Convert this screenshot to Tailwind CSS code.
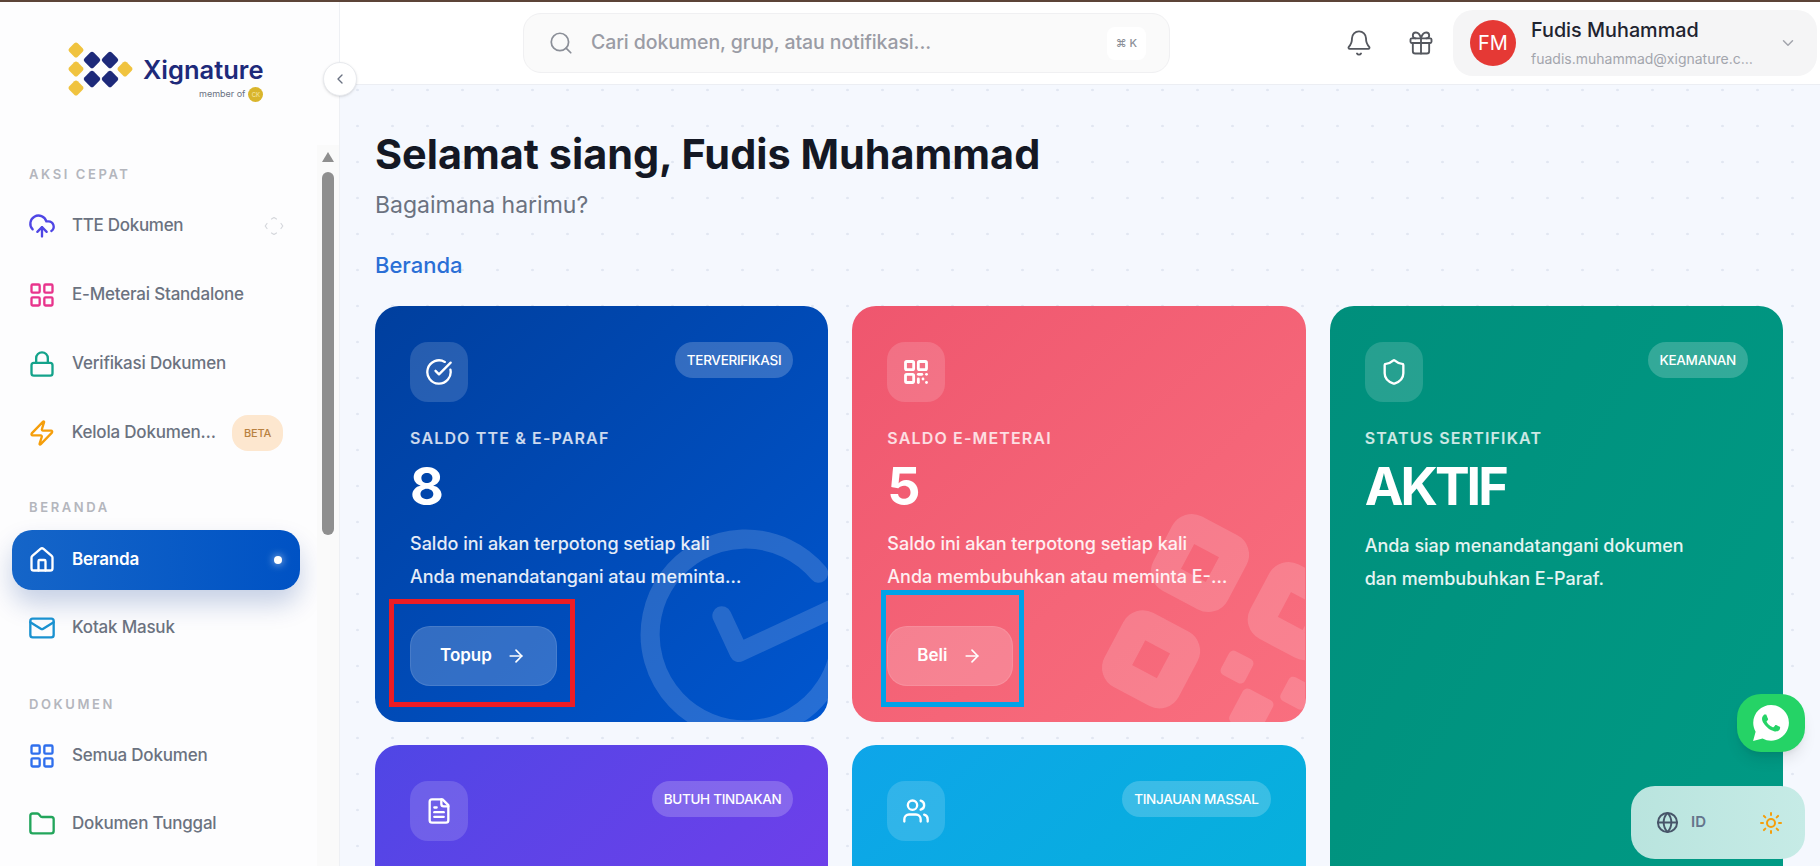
<!DOCTYPE html>
<html lang="id">
<head>
  <meta charset="UTF-8" />
  <meta name="viewport" content="width=device-width, initial-scale=1" />
  <title>Beranda - Xignature</title>
  <script src="https://cdn.jsdelivr.net/npm/@tailwindcss/browser@4"></script>
</head>
<body class="h-[866px] overflow-hidden flex flex-col bg-white text-gray-900 font-['Inter','DejaVu_Sans',sans-serif]">
  <div class="h-[2px] shrink-0 bg-[#5c4438]"></div>

  <div class="relative flex flex-1 min-h-0">
    <!-- Sidebar -->
    <aside class="w-[340px] shrink-0 flex flex-col bg-[#fdfdfe] border-r border-[#eef0f4]">
      <!-- Logo -->
      <div class="relative h-[143px] shrink-0">
        <svg class="absolute left-[60px] top-[30px]" width="80" height="76" viewBox="60 32 80 76">
          <g fill="#f0c33f">
            <rect x="-6" y="-6" width="12" height="12" rx="2.5" transform="translate(76 50) rotate(45)" />
            <rect x="-6" y="-6" width="12" height="12" rx="2.5" transform="translate(76 69) rotate(45)" />
            <rect x="-6" y="-6" width="12" height="12" rx="2.5" transform="translate(76 88) rotate(45)" />
            <rect x="-6" y="-6" width="12" height="12" rx="2.5" transform="translate(125 69) rotate(45)" />
          </g>
          <g fill="#1e2a7a">
            <rect x="-6.5" y="-6.5" width="13" height="13" rx="2.5" transform="translate(92 60) rotate(45)" />
            <rect x="-6.5" y="-6.5" width="13" height="13" rx="2.5" transform="translate(110 60) rotate(45)" />
            <rect x="-6.5" y="-6.5" width="13" height="13" rx="2.5" transform="translate(92 79) rotate(45)" />
            <rect x="-6.5" y="-6.5" width="13" height="13" rx="2.5" transform="translate(110 79) rotate(45)" />
          </g>
        </svg>
        <div class="absolute left-[143px] top-[51px] text-[25.5px] leading-[34px] font-semibold text-[#1e2a7a]">Xignature</div>
        <div class="absolute left-[199px] top-[83px] flex items-center gap-[3px]">
          <span class="text-[9px] leading-[18px] text-gray-500">member of</span>
          <span class="w-[15px] h-[15px] rounded-full bg-[#d9b52c] text-[6px] leading-[15px] text-center text-[#f6e9ad]">CK</span>
        </div>
      </div>

      <!-- Menu -->
      <div class="relative flex-1 min-h-0 overflow-hidden pl-3 pr-[39px] pt-[19px]">
        <p class="pl-[17px] h-5 text-[13px] leading-5 font-semibold tracking-[0.2em] text-[#b4b6bd]">AKSI CEPAT</p>
        <div class="mt-3 flex flex-col gap-[9px]">
          <a class="h-[60px] flex items-center gap-4 pl-4 text-[17px] font-medium tracking-[-0.3px] text-[#6b7280]">
            <svg class="w-7 h-7 text-[#4f46e5]" fill="none" viewBox="0 0 24 24" stroke="currentColor" stroke-width="2" stroke-linecap="round" stroke-linejoin="round"><path d="M12 13v8" /><path d="M4 14.899A7 7 0 1 1 15.71 8h1.79a4.5 4.5 0 0 1 2.5 8.242" /><path d="m8 17 4-4 4 4" /></svg>
            <span>TTE Dokumen</span>
            <svg class="ml-auto mr-4 w-5 h-5 text-[#d5d7dc]" fill="none" viewBox="0 0 20 20" stroke="currentColor" stroke-width="1.2" stroke-linecap="round" stroke-linejoin="round"><path d="m7.5 3 2.5-1.5L12.5 3" /><path d="m7.5 17 2.5 1.5 2.5-1.5" /><path d="M3 7.5 1.2 10 3 12.5" /><path d="m17 7.5 1.8 2.5-1.8 2.5" /></svg>
          </a>
          <a class="h-[60px] flex items-center gap-4 pl-4 text-[17px] font-medium tracking-[-0.2px] text-[#6b7280]">
            <svg class="w-7 h-7 text-[#e8348c]" fill="none" viewBox="0 0 24 24" stroke="currentColor" stroke-width="2" stroke-linecap="round" stroke-linejoin="round"><rect x="3" y="3" width="7" height="7" rx="1" /><rect x="14" y="3" width="7" height="7" rx="1" /><rect x="14" y="14" width="7" height="7" rx="1" /><rect x="3" y="14" width="7" height="7" rx="1" /></svg>
            <span>E-Meterai Standalone</span>
          </a>
          <a class="h-[60px] flex items-center gap-4 pl-4 text-[17px] font-medium tracking-[-0.2px] text-[#6b7280]">
            <svg class="w-7 h-7 text-[#14a38b]" fill="none" viewBox="0 0 24 24" stroke="currentColor" stroke-width="2" stroke-linecap="round" stroke-linejoin="round"><rect x="3" y="11" width="18" height="11" rx="2" /><path d="M7 11V7a5 5 0 0 1 10 0v4" /></svg>
            <span>Verifikasi Dokumen</span>
          </a>
          <a class="h-[60px] flex items-center gap-4 pl-4 text-[17px] font-medium tracking-[-0.2px] text-[#6b7280]">
            <svg class="w-7 h-7 text-[#f59e0b]" fill="none" viewBox="0 0 24 24" stroke="currentColor" stroke-width="2" stroke-linecap="round" stroke-linejoin="round"><path d="M4 14a1 1 0 0 1-.78-1.63l9.9-10.2a.5.5 0 0 1 .86.46l-1.92 6.02A1 1 0 0 0 13 10h7a1 1 0 0 1 .78 1.63l-9.9 10.2a.5.5 0 0 1-.86-.46l1.92-6.02A1 1 0 0 0 11 14z" /></svg>
            <span class="w-[146px] truncate">Kelola Dokumen Massal</span>
            <span class="ml-auto mr-[17px] w-[51px] h-9 shrink-0 rounded-2xl bg-[#fde7cf] text-[11px] leading-9 text-center font-medium text-[#b9813f]">BETA</span>
          </a>
        </div>

        <p class="mt-[34px] pl-[17px] h-5 text-[13px] leading-5 font-semibold tracking-[0.2em] text-[#b4b6bd]">BERANDA</p>
        <div class="mt-[13px] flex flex-col gap-2">
          <a class="h-[60px] flex items-center gap-4 pl-4 pr-[18px] rounded-[20px] bg-gradient-to-r from-[#1565c8] to-[#0052c4] shadow-[0_14px_26px_rgba(0,50,140,0.22)] text-[17px] font-semibold tracking-[-0.2px] text-white">
            <svg class="w-7 h-7" fill="none" viewBox="0 0 24 24" stroke="currentColor" stroke-width="2" stroke-linecap="round" stroke-linejoin="round"><path d="M15 21v-8a1 1 0 0 0-1-1h-4a1 1 0 0 0-1 1v8" /><path d="M3 10a2 2 0 0 1 .71-1.53l7-6a2 2 0 0 1 2.58 0l7 6A2 2 0 0 1 21 10v9a2 2 0 0 1-2 2H5a2 2 0 0 1-2-2z" /></svg>
            <span>Beranda</span>
            <span class="ml-auto w-2 h-2 rounded-full bg-white shadow-[0_0_8px_rgba(255,255,255,0.8)]"></span>
          </a>
          <a class="h-[60px] flex items-center gap-4 pl-4 text-[17px] font-medium tracking-[-0.2px] text-[#6b7280]">
            <svg class="w-7 h-7 text-[#1a91d0]" fill="none" viewBox="0 0 24 24" stroke="currentColor" stroke-width="2" stroke-linecap="round" stroke-linejoin="round"><rect x="2" y="4" width="20" height="16" rx="2" /><path d="m22 7-8.97 5.7a1.94 1.94 0 0 1-2.06 0L2 7" /></svg>
            <span>Kotak Masuk</span>
          </a>
        </div>

        <p class="mt-[36px] pl-[17px] h-5 text-[13px] leading-5 font-semibold tracking-[0.2em] text-[#b4b6bd]">DOKUMEN</p>
        <div class="mt-[12px] flex flex-col gap-2">
          <a class="h-[60px] flex items-center gap-4 pl-4 text-[17px] font-medium tracking-[-0.2px] text-[#6b7280]">
            <svg class="w-7 h-7 text-[#2f6fed]" fill="none" viewBox="0 0 24 24" stroke="currentColor" stroke-width="2" stroke-linecap="round" stroke-linejoin="round"><rect x="3" y="3" width="7" height="7" rx="1" /><rect x="14" y="3" width="7" height="7" rx="1" /><rect x="14" y="14" width="7" height="7" rx="1" /><rect x="3" y="14" width="7" height="7" rx="1" /></svg>
            <span>Semua Dokumen</span>
          </a>
          <a class="h-[60px] flex items-center gap-4 pl-4 text-[17px] font-medium tracking-[-0.2px] text-[#6b7280]">
            <svg class="w-7 h-7 text-[#22a55b]" fill="none" viewBox="0 0 24 24" stroke="currentColor" stroke-width="2" stroke-linecap="round" stroke-linejoin="round"><path d="M20 20a2 2 0 0 0 2-2V8a2 2 0 0 0-2-2h-7.9a2 2 0 0 1-1.69-.9L9.6 3.9A2 2 0 0 0 7.93 3H4a2 2 0 0 0-2 2v13a2 2 0 0 0 2 2Z" /></svg>
            <span>Dokumen Tunggal</span>
          </a>
        </div>

        <!-- Scrollbar -->
        <div class="absolute right-0 top-0 bottom-0 w-[22px] bg-[#fafafa] flex flex-col items-center pt-[7px]">
          <div class="w-0 h-0 border-x-[6px] border-x-transparent border-b-[10px] border-b-[#8f8f8f]"></div>
          <div class="mt-[10px] w-[12px] h-[363px] rounded-full bg-[#8f8f8f]"></div>
        </div>
      </div>
    </aside>

    <!-- Collapse sidebar -->
    <button class="absolute left-[323px] top-[60px] z-20 w-[34px] h-[34px] rounded-full bg-white border border-[#e8eaee] shadow-sm flex items-center justify-center text-gray-500">
      <svg class="w-4 h-4" fill="none" viewBox="0 0 24 24" stroke="currentColor" stroke-width="2" stroke-linecap="round" stroke-linejoin="round"><path d="m15 18-6-6 6-6" /></svg>
    </button>

    <!-- Main -->
    <main class="flex-1 min-w-0 flex flex-col bg-[#f5f8fe] bg-[radial-gradient(circle,#e2e7f2_1px,transparent_1.6px)] bg-[size:35px_36px] bg-[position:0_-2px]">
      <!-- Topbar -->
      <header class="h-[83px] shrink-0 flex items-center pl-[183px] pr-[3px] bg-white border-b border-[#eceef3]">
        <div class="w-[647px] h-[60px] flex items-center pl-6 pr-[23px] rounded-[18px] bg-[#fafafa] border border-[#f0f0f2]">
          <svg class="w-[26px] h-[26px] text-[#8b8f98]" fill="none" viewBox="0 0 24 24" stroke="currentColor" stroke-width="1.6" stroke-linecap="round" stroke-linejoin="round"><circle cx="11" cy="11" r="8" /><path d="m21 21-4.3-4.3" /></svg>
          <span class="ml-[17px] text-[19.5px] tracking-[-0.1px] font-medium text-[#9a9ca5]">Cari dokumen, grup, atau notifikasi...</span>
          <span class="ml-auto w-[39px] h-[33px] rounded-lg bg-white flex items-center justify-center text-[11px] font-medium text-[#8b8f98]">⌘ K</span>
        </div>
        <svg class="ml-auto w-7 h-7 text-[#55585f]" fill="none" viewBox="0 0 24 24" stroke="currentColor" stroke-width="1.6" stroke-linecap="round" stroke-linejoin="round"><path d="M10.268 21a2 2 0 0 0 3.464 0" /><path d="M3.262 15.326A1 1 0 0 0 4 17h16a1 1 0 0 0 .74-1.673C19.41 13.956 18 12.499 18 8A6 6 0 0 0 6 8c0 4.499-1.411 5.956-2.738 7.326" /></svg>
        <svg class="ml-[34px] w-7 h-7 text-[#55585f]" fill="none" viewBox="0 0 24 24" stroke="currentColor" stroke-width="1.6" stroke-linecap="round" stroke-linejoin="round"><rect x="3" y="8" width="18" height="4" rx="1" /><path d="M12 8v13" /><path d="M19 12v7a2 2 0 0 1-2 2H7a2 2 0 0 1-2-2v-7" /><path d="M7.5 8a2.5 2.5 0 0 1 0-5A4.8 8 0 0 1 12 8a4.8 8 0 0 1 4.5-5 2.5 2.5 0 0 1 0 5" /></svg>
        <div class="ml-[18px] w-[364px] h-[66px] flex items-center pl-[17px] pr-5 rounded-[20px] bg-[#f5f5f6]">
          <div class="w-[46px] h-[46px] shrink-0 rounded-full bg-[#e53935] flex items-center justify-center text-[20px] text-white">FM</div>
          <div class="ml-[15px] w-[224px]">
            <p class="text-[19.8px] leading-[24px] font-medium text-[#1f2430]">Fudis Muhammad</p>
            <p class="mt-2 text-[14px] leading-[18px] text-[#a3a5ad] truncate">fuadis.muhammad@xignature.com</p>
          </div>
          <svg class="ml-auto w-[18px] h-[18px] text-[#a3a5ad]" fill="none" viewBox="0 0 24 24" stroke="currentColor" stroke-width="2" stroke-linecap="round" stroke-linejoin="round"><path d="m6 9 6 6 6-6" /></svg>
        </div>
      </header>

      <!-- Content -->
      <div class="flex-1 min-h-0 overflow-hidden pl-[35px] pr-[37px] pt-[45px]">
        <h1 class="text-[41.4px] leading-[48px] font-bold text-[#141824]">Selamat siang, Fudis Muhammad</h1>
        <p class="mt-3 text-[23px] leading-[30px] text-[#6b7280]">Bagaimana harimu?</p>
        <p class="mt-[30px] text-[22px] leading-[30px] font-medium text-[#2a6fd6]">Beranda</p>

        <div class="mt-[26px] grid grid-cols-3 gap-x-6 gap-y-[23px] grid-rows-[416px_416px]">
          <!-- Saldo TTE -->
          <div class="relative overflow-hidden rounded-3xl bg-gradient-to-br from-[#003f9e] to-[#0056cf] pt-9 px-[35px] text-white">
            <svg class="absolute left-[256px] top-[214px] w-[229px] h-[229px] rotate-[20deg] text-white/15" fill="none" viewBox="0 0 24 24" stroke="currentColor" stroke-width="2" stroke-linecap="round" stroke-linejoin="round"><path d="M21.801 10A10 10 0 1 1 17 3.335" /><path d="m9 11 3 3L22 4" /></svg>
            <div class="relative flex items-start justify-between">
              <div class="w-[58px] h-[60px] rounded-[18px] bg-white/15 flex items-center justify-center">
                <svg class="w-7 h-7" fill="none" viewBox="0 0 24 24" stroke="currentColor" stroke-width="2" stroke-linecap="round" stroke-linejoin="round"><path d="M21.801 10A10 10 0 1 1 17 3.335" /><path d="m9 11 3 3L22 4" /></svg>
              </div>
              <span class="h-9 px-3 rounded-full bg-white/20 text-[13.5px] leading-9 font-medium tracking-[-0.3px]">TERVERIFIKASI</span>
            </div>
            <p class="relative mt-6 text-[16px] leading-6 font-semibold tracking-[1.15px] text-white/80">SALDO TTE &amp; E-PARAF</p>
            <p class="relative mt-[7px] text-[52px] leading-[60px] font-bold">8</p>
            <p class="relative mt-[10px] max-w-[342px] text-[18px] leading-[33px] font-medium text-white/90 line-clamp-2">Saldo ini akan terpotong setiap kali Anda menandatangani atau meminta tandatangan.</p>
            <button class="relative mt-[33px] h-[60px] flex items-center gap-[14px] pl-[29px] pr-[30px] rounded-[20px] bg-white/20 border border-white/10 text-[17px] font-semibold">
              Topup
              <svg class="w-5 h-5" fill="none" viewBox="0 0 24 24" stroke="currentColor" stroke-width="2" stroke-linecap="round" stroke-linejoin="round"><path d="M5 12h14" /><path d="m12 5 7 7-7 7" /></svg>
            </button>
            <!-- Annotation -->
            <div class="absolute left-[14px] top-[293px] w-[186px] h-[108px] border-[5px] border-[#ed1c24]"></div>
          </div>

          <!-- Saldo E-Meterai -->
          <div class="relative overflow-hidden rounded-3xl bg-gradient-to-br from-[#ef566e] to-[#f96f7f] pt-9 px-[35px] text-white">
            <svg class="absolute inset-0 text-white/15" width="453" height="416" fill="none" stroke="currentColor">
              <g transform="translate(348 257) rotate(28)">
                <rect x="-28" y="-28" width="56" height="56" rx="8" stroke-width="28" />
                <rect x="80" y="-31" width="56" height="56" rx="8" stroke-width="28" />
                <rect x="-26" y="80" width="56" height="56" rx="8" stroke-width="28" />
                <g fill="currentColor" stroke="none">
                  <rect x="68" y="61" width="27" height="27" rx="5" />
                  <rect x="98" y="88" width="34" height="38" rx="5" />
                  <rect x="133" y="56" width="27" height="27" rx="5" />
                </g>
              </g>
            </svg>
            <div class="relative flex items-start justify-between">
              <div class="w-[58px] h-[60px] rounded-[18px] bg-white/15 flex items-center justify-center">
                <svg class="w-7 h-7" fill="none" viewBox="0 0 24 24" stroke="currentColor" stroke-width="2.4" stroke-linecap="round" stroke-linejoin="round"><rect x="3" y="3" width="7" height="7" rx="1" /><rect x="14" y="3" width="7" height="7" rx="1" /><rect x="3" y="14" width="7" height="7" rx="1" /><path d="M14 14h3" /><path d="M21 14v.01" /><path d="M14 21v-3" /><path d="M18 18h.01" /><path d="M21 21v-.01" /></svg>
              </div>
            </div>
            <p class="relative mt-6 text-[16px] leading-6 font-semibold tracking-[1.15px] text-white/80">SALDO E-METERAI</p>
            <p class="relative mt-[7px] text-[52px] leading-[60px] font-bold">5</p>
            <p class="relative mt-[10px] max-w-[342px] text-[18px] leading-[33px] font-medium text-white/90 line-clamp-2">Saldo ini akan terpotong setiap kali Anda membubuhkan atau meminta E-Meterai pada dokumen.</p>
            <button class="relative mt-[33px] h-[60px] flex items-center gap-[14px] pl-[29px] pr-[30px] rounded-[20px] bg-white/20 border border-white/10 text-[17px] font-semibold">
              Beli
              <svg class="w-5 h-5" fill="none" viewBox="0 0 24 24" stroke="currentColor" stroke-width="2" stroke-linecap="round" stroke-linejoin="round"><path d="M5 12h14" /><path d="m12 5 7 7-7 7" /></svg>
            </button>
            <!-- Annotation -->
            <div class="absolute left-[29px] top-[284px] w-[143px] h-[117px] border-[5px] border-[#00a2e8]"></div>
          </div>

          <!-- Status Sertifikat -->
          <div class="row-span-2 rounded-3xl bg-gradient-to-br from-[#008f7c] to-[#009c86] pt-9 px-[35px] text-white">
            <div class="flex items-start justify-between">
              <div class="w-[58px] h-[60px] rounded-[18px] bg-white/15 flex items-center justify-center">
                <svg class="w-7 h-7" fill="none" viewBox="0 0 24 24" stroke="currentColor" stroke-width="2" stroke-linecap="round" stroke-linejoin="round"><path d="M20 13c0 5-3.5 7.5-7.66 8.95a1 1 0 0 1-.67-.01C7.5 20.5 4 18 4 13V6a1 1 0 0 1 1-1c2 0 4.5-1.2 6.24-2.72a1.17 1.17 0 0 1 1.52 0C14.51 3.81 17 5 19 5a1 1 0 0 1 1 1z" /></svg>
              </div>
              <span class="h-9 px-3 rounded-full bg-white/20 text-[13.5px] leading-9 font-medium tracking-[-0.3px]">KEAMANAN</span>
            </div>
            <p class="mt-6 text-[16px] leading-6 font-semibold tracking-[1.15px] text-white/80">STATUS SERTIFIKAT</p>
            <p class="mt-[7px] text-[52px] leading-[60px] font-bold tracking-[-3px]">AKTIF</p>
            <p class="mt-[12px] max-w-[342px] text-[18px] leading-[33px] font-medium text-white/90">Anda siap menandatangani dokumen dan membubuhkan E-Paraf.</p>
          </div>

          <!-- Butuh Tindakan -->
          <div class="rounded-3xl bg-gradient-to-br from-[#4f46e5] to-[#7c3aed] pt-9 px-[35px] text-white">
            <div class="flex items-start justify-between">
              <div class="w-[58px] h-[60px] rounded-[18px] bg-white/15 flex items-center justify-center">
                <svg class="w-7 h-7" fill="none" viewBox="0 0 24 24" stroke="currentColor" stroke-width="2" stroke-linecap="round" stroke-linejoin="round"><path d="M15 2H6a2 2 0 0 0-2 2v16a2 2 0 0 0 2 2h12a2 2 0 0 0 2-2V7Z" /><path d="M14 2v4a2 2 0 0 0 2 2h4" /><path d="M10 9H8" /><path d="M16 13H8" /><path d="M16 17H8" /></svg>
              </div>
              <span class="h-9 px-3 rounded-full bg-white/20 text-[13.5px] leading-9 font-medium tracking-[-0.3px]">BUTUH TINDAKAN</span>
            </div>
          </div>

          <!-- Tinjauan Massal -->
          <div class="rounded-3xl bg-gradient-to-br from-[#0ea5e9] to-[#06b6d4] pt-9 px-[35px] text-white">
            <div class="flex items-start justify-between">
              <div class="w-[58px] h-[60px] rounded-[18px] bg-white/15 flex items-center justify-center">
                <svg class="w-7 h-7" fill="none" viewBox="0 0 24 24" stroke="currentColor" stroke-width="2" stroke-linecap="round" stroke-linejoin="round"><path d="M16 21v-2a4 4 0 0 0-4-4H6a4 4 0 0 0-4 4v2" /><path d="M16 3.128a4 4 0 0 1 0 7.744" /><path d="M22 21v-2a4 4 0 0 0-3-3.87" /><circle cx="9" cy="7" r="4" /></svg>
              </div>
              <span class="h-9 px-3 rounded-full bg-white/20 text-[13.5px] leading-9 font-medium tracking-[-0.3px]">TINJAUAN MASSAL</span>
            </div>
          </div>
        </div>
      </div>
    </main>

    <!-- WhatsApp -->
    <a class="absolute left-[1737px] top-[692px] z-20 w-[68px] h-[58px] rounded-[24px] bg-[#25d366] shadow-lg flex items-center justify-center">
      <svg class="w-9 h-9" viewBox="0 0 24 24"><path fill="#ffffff" d="M20.464 3.488A11.815 11.815 0 0012.05 0C5.495 0 .16 5.335.157 11.892c0 2.096.547 4.142 1.588 5.945L.057 24l6.305-1.654a11.882 11.882 0 005.683 1.448h.005c6.554 0 11.89-5.335 11.893-11.893a11.821 11.821 0 00-3.48-8.413z" /><path fill="#25d366" d="M17.472 14.382c-.297-.149-1.758-.867-2.03-.967-.273-.099-.471-.148-.67.15-.197.297-.767.966-.94 1.164-.173.199-.347.223-.644.075-.297-.15-1.255-.463-2.39-1.475-.883-.788-1.48-1.761-1.653-2.059-.173-.297-.018-.458.13-.606.134-.133.298-.347.446-.52.149-.174.198-.298.298-.497.099-.198.05-.371-.025-.52-.075-.149-.669-1.612-.916-2.207-.242-.579-.487-.5-.669-.51-.173-.008-.371-.01-.57-.01-.198 0-.52.074-.792.372-.272.297-1.04 1.016-1.04 2.479 0 1.462 1.065 2.875 1.213 3.074.149.198 2.096 3.2 5.077 4.487.709.306 1.262.489 1.694.625.712.227 1.36.195 1.871.118.571-.085 1.758-.719 2.006-1.413.248-.694.248-1.289.173-1.413-.074-.124-.272-.198-.57-.347" /></svg>
    </a>

    <!-- Bahasa & tema -->
    <div class="absolute left-[1631px] top-[784px] z-20 w-[174px] h-[73px] rounded-[24px] bg-gradient-to-r from-[#b9e4de] to-[#c6ebe6] flex items-center pl-[25px] pr-[22px]">
      <svg class="w-[23px] h-[23px] text-[#475569]" fill="none" viewBox="0 0 24 24" stroke="currentColor" stroke-width="2" stroke-linecap="round" stroke-linejoin="round"><circle cx="12" cy="12" r="10" /><path d="M12 2a14.5 14.5 0 0 0 0 20 14.5 14.5 0 0 0 0-20" /><path d="M2 12h20" /></svg>
      <span class="ml-3 text-[15px] font-semibold text-[#64748b]">ID</span>
      <svg class="ml-auto w-6 h-6 text-[#f59e0b]" fill="none" viewBox="0 0 24 24" stroke="currentColor" stroke-width="2" stroke-linecap="round" stroke-linejoin="round"><circle cx="12" cy="12" r="4" /><path d="M12 2v2" /><path d="M12 20v2" /><path d="m4.93 4.93 1.41 1.41" /><path d="m17.66 17.66 1.41 1.41" /><path d="M2 12h2" /><path d="M20 12h2" /><path d="m6.34 17.66-1.41 1.41" /><path d="m19.07 4.93-1.41 1.41" /></svg>
    </div>
  </div>
</body>
</html>
